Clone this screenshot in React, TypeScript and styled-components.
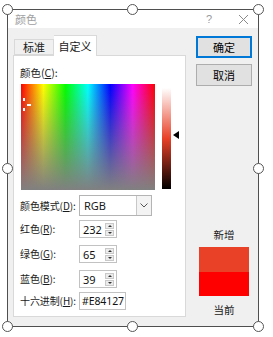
import styled, { createGlobalStyle } from "styled-components";

const GlobalStyle = createGlobalStyle`
  html, body {
    margin: 0;
    padding: 0;
    background: #ffffff;
  }
  body {
    font-family: "Noto Sans CJK SC", "Noto Sans", "Liberation Sans", sans-serif;
    font-size: 10.5px;
    color: #1a1a1a;
  }
`;

const Stage = styled.div`
  position: relative;
  width: 273px;
  height: 337px;
  box-sizing: border-box;
  padding: 9px 0 0 7px;
  overflow: hidden;
`;

const Dialog = styled.div`
  width: 252px;
  height: 318px;
  box-sizing: border-box;
  border: 1px solid #4f4f4f;
  background: #f0f0f0;
  display: flex;
  flex-direction: column;
`;

const TitleBar = styled.div`
  height: 21px;
  background: #ffffff;
  display: flex;
  align-items: center;
  padding-left: 7px;
  color: #a0a0a0;
  line-height: 14px;
  font-size: 11px;
`;

const Title = styled.span`
  flex: 1;
`;

const Help = styled.span`
  width: 14px;
  text-align: center;
  margin-right: 21px;
  color: #9a9a9a;
  font-family: "Liberation Sans", sans-serif;
  font-size: 11px;
`;

const Close = styled.span`
  width: 12px;
  height: 12px;
  margin-right: 9px;
  display: flex;
  align-items: center;
  justify-content: center;
`;

const Body = styled.div`
  flex: 1;
  display: flex;
  padding: 7px 5px 9px 5px;
`;

const LeftCol = styled.div`
  width: 173px;
  display: flex;
  flex-direction: column;
`;

const TabRow = styled.div`
  height: 20px;
  display: flex;
  align-items: flex-end;
  padding-left: 1px;
  position: relative;
  z-index: 1;
`;

const Tab = styled.div<{ active?: boolean }>`
  box-sizing: border-box;
  height: ${(p) => (p.active ? "21px" : "16px")};
  width: ${(p) => (p.active ? "43px" : "40px")};
  margin-bottom: ${(p) => (p.active ? "-1px" : "0")};
  background: ${(p) => (p.active ? "#ffffff" : "#f0f0f0")};
  border: 1px solid #d9d9d9;
  border-bottom: ${(p) => (p.active ? "none" : "1px solid #d9d9d9")};
  border-left: ${(p) => (p.active ? "none" : "1px solid #d9d9d9")};
  display: flex;
  align-items: center;
  justify-content: center;
  line-height: 14px;
  font-size: 11px;
  color: #1a1a1a;
`;

const Panel = styled.div`
  flex: 1;
  background: #ffffff;
  border: 1px solid #d9d9d9;
  padding: 10px 0 0 6px;
  display: flex;
  flex-direction: column;
`;

const Label = styled.div`
  line-height: 14px;
  height: 14px;
  white-space: nowrap;
`;

const PickerRow = styled.div`
  display: flex;
  margin: 4px 0 0 1px;
`;

const Spectrum = styled.div`
  position: relative;
  width: 134px;
  height: 106px;
  overflow: hidden;
  background: linear-gradient(to bottom, rgba(128, 128, 128, 0), #808080),
    linear-gradient(
      to right,
      #ff0000,
      #ffff00,
      #00ff00,
      #00ffff,
      #0000ff,
      #ff00ff,
      #ff0000
    );
`;

const Cross = styled.div<{ w: number; h: number }>`
  position: absolute;
  width: ${(p) => p.w}px;
  height: ${(p) => p.h}px;
  background: #ffffff;
`;

const LumWrap = styled.div`
  position: relative;
  margin: 4px 0 0 7px;
  width: 18px;
  height: 101px;
`;

const LumBar = styled.div`
  width: 9px;
  height: 101px;
  background: linear-gradient(to bottom, #ffffff 0%, #e84127 50%, #000000 100%);
`;

const LumArrow = styled.div`
  position: absolute;
  left: 11px;
  width: 0;
  height: 0;
  border-top: 4px solid transparent;
  border-bottom: 4px solid transparent;
  border-right: 6px solid #000000;
`;

const Form = styled.div`
  margin-top: 5px;
  display: flex;
  flex-direction: column;
`;

const FormRow = styled.div<{ h: number; gap: number }>`
  display: flex;
  align-items: center;
  height: ${(p) => p.h}px;
  margin-top: ${(p) => p.gap}px;
`;

const RowLabel = styled(Label)`
  width: 59px;
  font-size: 10px;
  letter-spacing: -0.1px;
`;

const Select = styled.div`
  box-sizing: border-box;
  width: 73px;
  height: 21px;
  border: 1px solid #b4b4b4;
  display: flex;
  align-items: center;
`;

const SelectText = styled.span`
  flex: 1;
  padding-left: 4px;
  font-family: "Noto Sans", "Liberation Sans", sans-serif;
  font-size: 11px;
`;

const DropButton = styled.div`
  width: 14px;
  height: 19px;
  border-left: 1px solid #c8c8c8;
  background: #f3f3f3;
  display: flex;
  align-items: center;
  justify-content: center;
`;

const InputBox = styled.div<{ w: number }>`
  box-sizing: border-box;
  width: ${(p) => p.w}px;
  height: 18px;
  border: 1px solid #c2c2c2;
  display: flex;
  align-items: center;
  padding-left: 3px;
  font-family: "Noto Sans", "Liberation Sans", sans-serif;
  font-size: 11px;
  color: #111;
  white-space: nowrap;
  overflow: hidden;
`;

const HexBox = styled(InputBox)`
  padding-left: 2px;
  font-size: 10.5px;
  letter-spacing: -0.1px;
`;

const InputValue = styled.span`
  flex: 1;
`;

const Spinner = styled.div`
  width: 9px;
  height: 13px;
  margin-right: 2px;
  display: flex;
  flex-direction: column;
  gap: 1px;
`;

const SpinButton = styled.div<{ up?: boolean }>`
  flex: 1;
  box-sizing: border-box;
  border: 1px solid #c9c9c9;
  background: #ececec;
  display: flex;
  align-items: center;
  justify-content: center;
  &::after {
    content: "";
    width: 0;
    height: 0;
    border-left: 2px solid transparent;
    border-right: 2px solid transparent;
    ${(p) =>
      p.up ? "border-bottom: 2px solid #333;" : "border-top: 2px solid #333;"}
  }
`;

const RightCol = styled.div`
  width: 56px;
  margin-left: 10px;
  padding-top: 1px;
  display: flex;
  flex-direction: column;
  align-items: center;
`;

const Button = styled.div<{ primary?: boolean }>`
  box-sizing: border-box;
  width: 56px;
  height: 22px;
  margin-bottom: 6px;
  background: #e1e1e1;
  border: ${(p) => (p.primary ? "2px solid #0078d7" : "1px solid #adadad")};
  display: flex;
  align-items: center;
  justify-content: center;
  line-height: 14px;
  font-size: 11px;
  color: #000;
`;

const PreviewGroup = styled.div`
  margin-top: 136px;
  display: flex;
  flex-direction: column;
  align-items: center;
`;

const Swatch = styled.div`
  width: 50px;
  height: 49px;
  margin: 5px 0 7px;
  display: flex;
  flex-direction: column;
`;

const SwatchHalf = styled.div<{ color: string }>`
  flex: 1;
  background: ${(p) => p.color};
`;

const Handle = styled.div`
  position: absolute;
  width: 11px;
  height: 11px;
  box-sizing: border-box;
  border: 1.5px solid #555555;
  border-radius: 50%;
  background: #ffffff;
`;

const handles = [
  [7, 9],
  [132, 9],
  [258, 9],
  [7, 168],
  [258, 168],
  [7, 326],
  [132, 326],
  [258, 326],
];

const Key = ({ k }: { k: string }) => (
  <>
    (<u>{k}</u>):
  </>
);

const SpinField = ({ value }: { value: string }) => (
  <InputBox w={38}>
    <InputValue>{value}</InputValue>
    <Spinner>
      <SpinButton up />
      <SpinButton />
    </Spinner>
  </InputBox>
);

const App = () => {
  return (
    <>
      <GlobalStyle />
      <Stage>
        <Dialog>
          <TitleBar>
            <Title>颜色</Title>
            <Help>?</Help>
            <Close>
              <svg width="11" height="11" viewBox="0 0 11 11">
                <path d="M1 1 L10 10 M10 1 L1 10" stroke="#8a8a8a" strokeWidth="1" />
              </svg>
            </Close>
          </TitleBar>
          <Body>
            <LeftCol>
              <TabRow>
                <Tab>标准</Tab>
                <Tab active>自定义</Tab>
              </TabRow>
              <Panel>
                <Label>
                  颜色<Key k="C" />
                </Label>
                <PickerRow>
                  <Spectrum>
                    <Cross w={2} h={3} style={{ left: 2, top: 14 }} />
                    <Cross w={2} h={3} style={{ left: 2, top: 24 }} />
                    <Cross w={4} h={2} style={{ left: 6, top: 20 }} />
                    <Cross w={4} h={2} style={{ left: -6, top: 20 }} />
                  </Spectrum>
                  <LumWrap>
                    <LumBar />
                    <LumArrow style={{ top: 43 }} />
                  </LumWrap>
                </PickerRow>
                <Form>
                  <FormRow h={21} gap={0}>
                    <RowLabel>
                      颜色模式<Key k="D" />
                    </RowLabel>
                    <Select>
                      <SelectText>RGB</SelectText>
                      <DropButton>
                        <svg width="8" height="5" viewBox="0 0 8 5">
                          <path d="M0.5 0.5 L4 4 L7.5 0.5" stroke="#555" strokeWidth="1" fill="none" />
                        </svg>
                      </DropButton>
                    </Select>
                  </FormRow>
                  <FormRow h={18} gap={4}>
                    <RowLabel>
                      红色<Key k="R" />
                    </RowLabel>
                    <SpinField value="232" />
                  </FormRow>
                  <FormRow h={18} gap={7}>
                    <RowLabel>
                      绿色<Key k="G" />
                    </RowLabel>
                    <SpinField value="65" />
                  </FormRow>
                  <FormRow h={18} gap={7}>
                    <RowLabel>
                      蓝色<Key k="B" />
                    </RowLabel>
                    <SpinField value="39" />
                  </FormRow>
                  <FormRow h={18} gap={4}>
                    <RowLabel>
                      十六进制<Key k="H" />
                    </RowLabel>
                    <HexBox w={47}>#E84127</HexBox>
                  </FormRow>
                </Form>
              </Panel>
            </LeftCol>
            <RightCol>
              <Button primary>确定</Button>
              <Button>取消</Button>
              <PreviewGroup>
                <Label>新增</Label>
                <Swatch>
                  <SwatchHalf color="#e84127" />
                  <SwatchHalf color="#ff0000" />
                </Swatch>
                <Label>当前</Label>
              </PreviewGroup>
            </RightCol>
          </Body>
        </Dialog>
        {handles.map(([x, y], i) => (
          <Handle key={i} style={{ left: x - 5.5, top: y - 5.5 }} />
        ))}
      </Stage>
    </>
  );
};

export default App;
